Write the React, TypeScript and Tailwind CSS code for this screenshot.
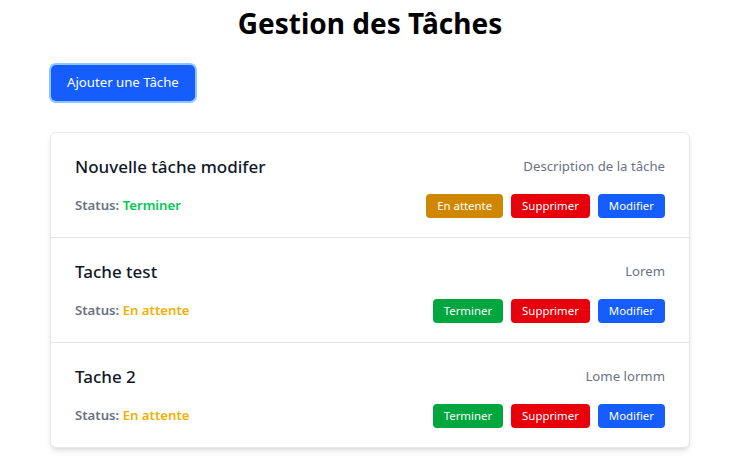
import React from "react";

type Task = { title: string; desc: string; status: "Terminer" | "En attente" };

const tasks: Task[] = [
  { title: "Nouvelle tâche modifer", desc: "Description de la tâche", status: "Terminer" },
  { title: "Tache test", desc: "Lorem", status: "En attente" },
  { title: "Tache 2", desc: "Lome lormm", status: "En attente" },
];

export default function App() {
  return (
    <div
      className="min-h-screen bg-white pl-[50px] pr-[58px] pt-[5px]"
      style={{ fontFamily: '"Noto Sans", "Open Sans", sans-serif' }}
    >
      <h1 className="text-center text-[28px] leading-[36px] font-bold text-black">Gestion des Tâches</h1>
      <div className="mt-[24px]">
        <button className="h-[36px] rounded-[5px] bg-[#155dfc] px-[16px] text-[13.2px] text-white ring-2 ring-[#8ec5ff] ml-[1px]">
          Ajouter une Tâche
        </button>
      </div>
      <div className="mt-[31px] rounded-[6px] border border-[#e5e7eb] shadow-md bg-white">
        {tasks.map((t, i) => (
          <div
            key={i}
            className={`px-[24px] pt-[20px] pb-[19px] ${i < tasks.length - 1 ? "border-b border-[#e5e7eb]" : ""}`}
          >
            <div className="flex items-center justify-between h-[28px]">
              <span className="text-[17px] font-medium text-[#101828]">{t.title}</span>
              <span className="text-[13.2px] text-[#6a7282]">{t.desc}</span>
            </div>
            <div className="mt-[13px] flex items-center justify-between h-[24px]">
              <span className="text-[13.2px] font-semibold text-[#6a7282]">
                Status:{" "}
                <span className={t.status === "Terminer" ? "text-[#00c951]" : "text-[#f0b100]"}>
                  {t.status}
                </span>
              </span>
              <div className="flex gap-[8px]">
                {t.status === "Terminer" ? (
                  <button className="h-[24px] rounded-[4px] bg-[#d08700] px-[11px] text-[11.4px] text-white">En attente</button>
                ) : (
                  <button className="h-[24px] rounded-[4px] bg-[#00a63e] px-[11px] text-[11.4px] text-white">Terminer</button>
                )}
                <button className="h-[24px] rounded-[4px] bg-[#e7000b] px-[11px] text-[11.4px] text-white">Supprimer</button>
                <button className="h-[24px] rounded-[4px] bg-[#155dfc] px-[11px] text-[11.4px] text-white">Modifier</button>
              </div>
            </div>
          </div>
        ))}
      </div>
    </div>
  );
}
